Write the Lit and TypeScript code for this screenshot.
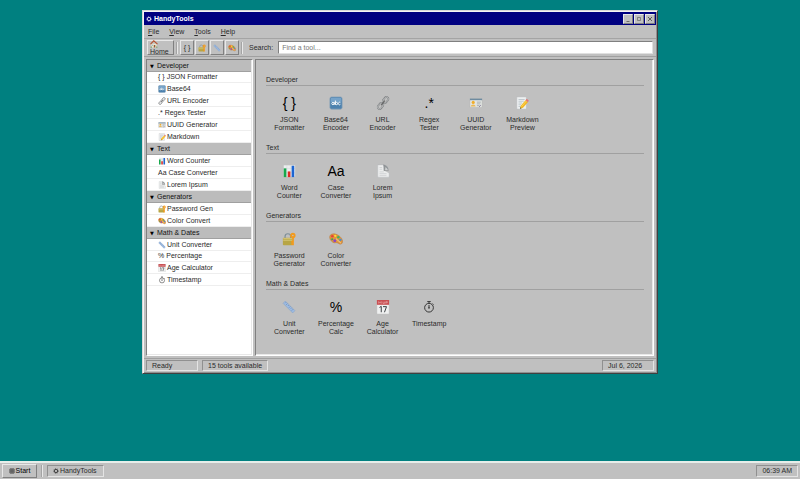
import { LitElement, html, css, svg, nothing, type TemplateResult } from "lit";
import { customElement, property } from "lit/decorators.js";
import { classMap } from "lit/directives/class-map.js";

const art: Record<string, TemplateResult> = {
  abc: svg`<rect x="1" y="1" width="14" height="14" rx="2" fill="#4d82ae" stroke="#8ba4b8" stroke-width=".8"/>
    <rect x="2" y="2" width="12" height="5" rx="1" fill="#76a3c9"/>
    <g fill="none" stroke="#fff" stroke-width="1.1"><circle cx="4.5" cy="8.6" r="1.3"/><path d="M6 7v3M7.3 5.2V10"/><circle cx="8.6" cy="8.6" r="1.3"/><path d="M13 7.6a1.4 1.4 0 1 0 0 2"/></g>`,
  link: svg`<g fill="none" stroke="#6d7072" stroke-width="1.7"><rect x="8.6" y=".8" width="4.6" height="7.6" rx="2.3" transform="rotate(38 10.9 4.6)"/><rect x="2.8" y="7.6" width="4.6" height="7.6" rx="2.3" transform="rotate(38 5.1 11.4)"/></g>
    <g fill="none" stroke="#e2e4e5" stroke-width=".7"><rect x="8.6" y=".8" width="4.6" height="7.6" rx="2.3" transform="rotate(38 10.9 4.6)"/><rect x="2.8" y="7.6" width="4.6" height="7.6" rx="2.3" transform="rotate(38 5.1 11.4)"/></g><path d="M6.2 10.2l3.6-4.6" stroke="#666" stroke-width="1.3" stroke-linecap="round"/>`,
  id: svg`<rect x="1" y="3" width="14" height="10" rx=".8" fill="#e4e6e4" stroke="#a9acaa" stroke-width=".5"/>
    <rect x="1" y="3" width="14" height="1.8" fill="#6e8ba0"/><circle cx="4.8" cy="7.3" r="1.8" fill="#f0ae2c"/><path d="M2 12c.2-3.2 5.3-3.2 5.6 0z" fill="#e9b95a"/>
    <path d="M9 7h4.5M9 9h4M9 11h3" stroke="#909b9d" stroke-width=".8"/><path d="M11.5 12.5l2-2" stroke="#547" stroke-width=".7"/>`,
  memo: svg`<path d="M2 1h11v14H2z" fill="#edf0f1" stroke="#b1b4b6" stroke-width=".5"/><path d="M4 4h7M4 6h6M4 8h4M4 10h3M4 12h3" stroke="#a6b1b9" stroke-width=".7"/>
    <path d="M6.6 11.2L12 4.8l2.7 2.2-5.5 6.4-3.5 1.3z" fill="#f3b822"/><path d="M12 4.8l1-1.2c.6-.6 3.2 1.4 2.6 2.2l-.9 1.2z" fill="#e57672"/><path d="M7.5 12l5.5-6.3" stroke="#ffdc6c" stroke-width=".8"/><path d="M5.7 14.7l.5-1.8 1.4 1.1z" fill="#443"/>`,
  chart: svg`<rect x="2" y="1.5" width="13" height="13" fill="#eceeef"/><path d="M5.5 1.5v13M9.5 1.5v13M2 5h13M2 10h13" stroke="#cdd4d8" stroke-width=".5"/>
    <rect x="2" y="5" width="3" height="10" fill="#17a84c"/><rect x="6.6" y="8.5" width="3" height="6.5" fill="#e02a25"/><rect x="11" y="2" width="3" height="13" fill="#1d65d2"/>`,
  page: svg`<path d="M2 1h7v6l6 3.2V15H2z" fill="#eceded" stroke="#b4b8ba" stroke-width=".4"/><path d="M8.5 1c3.2-.2 6 3 5.8 6.5L9 7.6z" fill="#959a9d"/><path d="M8.5 1c2.4 1.5 2.8 4.5.7 6.5 2-.7 4-.6 5.1 0" fill="#dfe1e2" stroke="#777" stroke-width=".5"/><path d="M4 4h3M4 6h3M4 9h5M4 11h8M4 13h8" stroke="#bbc0c3" stroke-width=".6"/>`,
  lock: svg`<path d="M3.5 8V5c0-4 6.4-4 6.4 0v3" fill="none" stroke="#7f9099" stroke-width="1.4"/><rect x="1" y="6.6" width="11" height="8.4" rx=".8" fill="#b7a545"/><path d="M1.4 7.6h10M1.4 9.4h10" stroke="#dccc7e" stroke-width="1"/>
    <circle cx="12.4" cy="4" r="2" fill="none" stroke="#f29a1c" stroke-width="2.2"/><path d="M12.6 6v9M12.6 11.2h-2.2M12.6 13.8h-2" stroke="#f29a1c" stroke-width="1.9"/>`,
  palette: svg`<path d="M1 4.6C2.2 1.4 7 1.4 11 4c4.2 2.800 5.800 7.600 3.400 9.400-2 1.500-3.400-.8-5.400-1.200-1.800-.3-2.600.9-4.800-.6C1.600 9.800.2 7 1 4.600z" fill="#e0963f" stroke="#b36f2c" stroke-width=".5"/>
    <circle cx="3.800" cy="4.900" r="1.500" fill="#e8413a"/><circle cx="7.200" cy="4.300" r="1.300" fill="#ffdc35"/><circle cx="10.700" cy="6" r="1.400" fill="#3fb562"/><circle cx="13" cy="9" r="1.300" fill="#3f8fda"/><circle cx="6.600" cy="10" r="1.700" fill="#8a45c4"/><circle cx="3.600" cy="8.200" r="1.200" fill="#3f9f5a"/><path d="M8 7.600l5.500 5" stroke="#f4dc9c" stroke-width="1"/>`,
  ruler: svg`<path d="M1.2 3.8L3.8 1.2 14.8 12.2 12.2 14.8z" fill="#9dbbe2" stroke="#7e99bd" stroke-width=".5"/><path d="M4.7 2.5L3.5 3.7M6.3 4.1L4.6 5.8M7.9 5.7L6.7 6.9M9.5 7.3L7.8 9M11.1 8.9L9.9 10.1M12.7 10.5L11 12.2" stroke="#5f7da6" stroke-width=".6"/>`,
  calendar: svg`<rect x="1" y="0" width="14" height="16" rx="1" fill="#eff0f0" stroke="#b7b7b7" stroke-width=".4"/><path d="M1 0h14v5.500H1z" fill="#c94f52"/><path d="M3 4V1.900l1.500 1.300L6 1.900V4M8 1.900v2h1.600v-2M11.200 4V1.900H13v1.200h-1.800" fill="none" stroke="#eebbbb" stroke-width=".6"/>
    <path d="M4 8.500L6 7.300v6.700M8 7.600h4l-2.300 6.400" fill="none" stroke="#34393c" stroke-width="1.100"/>`,
  timer: svg`<circle cx="8" cy="8.8" r="5" fill="none" stroke="#333" stroke-width="1.1"/><path d="M8 3.7V2M6 1.8h4M8 9V5.7M12 4.2l1.2 1" fill="none" stroke="#333" stroke-width="1.1"/><circle cx="8" cy="9" r=".9" fill="#333"/>`,
  house: svg`<path d="M3 7.5h10V15H3z" fill="#efe5ca"/><path d="M1 8.2L7.5 1.5 15 8.2" fill="none" stroke="#b7532f" stroke-width="2.2"/><path d="M7.6 10h3v5h-3z" fill="#925b37"/><path d="M4.3 9.5h2v2h-2z" fill="#6babc9"/><path d="M1 15c0-3 3-3 3 0zM12 15c0-3 3-3 3 0z" fill="#539347"/>`,
  gear: svg`<circle cx="8" cy="8" r="4.6" fill="none" stroke="currentColor" stroke-width="2.2"/><circle cx="8" cy="8" r="6.4" fill="none" stroke="currentColor" stroke-width="1.6" stroke-dasharray="2 3"/><circle cx="8" cy="8" r="1" fill="currentColor"/>`,
  grid: svg`<path d="M2.5 2.5h11v11h-11zM8 2.5v11M2.5 8h11" fill="none" stroke="currentColor" stroke-width="1.5"/>`,
  minimise: svg`<path d="M5 13h6" stroke="#555" stroke-width="1.600"/>`,
  maximise: svg`<path d="M5 5h6v6H5z" fill="none" stroke="#666" stroke-width="1.400"/>`,
  close: svg`<path d="M4 4l8 8M12 4L4 12" stroke="#444" stroke-width="1.600"/>`,
};

@customElement("ht-icon")
class HtIcon extends LitElement {
  @property() name = "";
  static styles = css`
    :host { display: inline-flex; flex: none; width: 8px; height: 8px; }
    .art { width: 100%; height: 100%; }
  `;
  render() {
    return html`<svg class="art" viewBox="0 0 16 16" aria-hidden="true">${art[this.name] ?? nothing}</svg>`;
  }
}

interface Tool { icon?: string; glyph?: string; side: string; title: string; }
interface Group { name: string; tools: Tool[]; }

const groups: Group[] = [
  { name: "Developer", tools: [
    { glyph: "{ }", side: "JSON Formatter", title: "JSON Formatter" },
    { icon: "abc", side: "Base64", title: "Base64 Encoder" },
    { icon: "link", side: "URL Encoder", title: "URL Encoder" },
    { glyph: ".*", side: "Regex Tester", title: "Regex Tester" },
    { icon: "id", side: "UUID Generator", title: "UUID Generator" },
    { icon: "memo", side: "Markdown", title: "Markdown Preview" },
  ] },
  { name: "Text", tools: [
    { icon: "chart", side: "Word Counter", title: "Word Counter" },
    { glyph: "Aa", side: "Case Converter", title: "Case Converter" },
    { icon: "page", side: "Lorem Ipsum", title: "Lorem Ipsum" },
  ] },
  { name: "Generators", tools: [
    { icon: "lock", side: "Password Gen", title: "Password Generator" },
    { icon: "palette", side: "Color Convert", title: "Color Converter" },
  ] },
  { name: "Math & Dates", tools: [
    { icon: "ruler", side: "Unit Converter", title: "Unit Converter" },
    { glyph: "%", side: "Percentage", title: "Percentage Calc" },
    { icon: "calendar", side: "Age Calculator", title: "Age Calculator" },
    { icon: "timer", side: "Timestamp", title: "Timestamp" },
  ] },
];

const menus = ["File", "View", "Tools", "Help"];

@customElement("app-root")
class AppRoot extends LitElement {
  static styles = css`
    :host {
      display: flex; flex-direction: column; min-height: 100vh;
      background: #008080; color: #2a2a2a;
      font: 7px/8px "Liberation Sans", Arial, sans-serif;
    }
    * { box-sizing: border-box; }
    button, input { font: inherit; color: inherit; margin: 0; padding: 0; border: 0; border-radius: 0; background: none; }
    .raised { background: #c0c0c0; border: 1px solid; border-color: #e8e8e8 #808080 #808080 #e8e8e8; }
    .sunken { border: 1px solid; border-color: #909090 #e4e4e4 #e4e4e4 #909090; }
    .desktop { flex: 1; padding: 10px 142px; }
    .window {
      background: #c0c0c0; border: 1px solid; border-color: #d8d8d8 #404040 #404040 #d8d8d8;
      box-shadow: inset 1px 1px #f4f4f4, inset -1px -1px #909090; padding: 1px;
    }
    .titlebar { display: flex; align-items: center; gap: 1px; height: 13px; padding: 0 1px 0 2px; background: #000080; color: #fff; }
    .caption { flex: 1; margin: 0; padding-left: 1px; font: inherit; font-weight: bold; }
    .control { display: flex; align-items: center; justify-content: center; width: 10px; height: 10px; }
    .menubar { display: flex; gap: 2px; height: 14px; align-items: center; border-bottom: 1px solid #a4a4a4; }
    .menu { padding: 0 4px; }
    .toolbar { display: flex; align-items: center; gap: 1px; height: 18px; padding: 0 3px; border-bottom: 1px solid #a0a0a0; }
    .home { width: 27px; height: 15px; padding: 0 2px; text-align: left; line-height: 7px; display: flex; flex-direction: column; justify-content: center; align-items: flex-start; }
    .tool { width: 14px; height: 15px; display: flex; align-items: center; justify-content: center; }
    .rule { width: 2px; height: 12px; margin: 0 1px; border-left: 1px solid #a4a4a4; border-right: 1px solid #e8e8e8; }
    .search-label { padding: 0 4px; }
    .search { flex: 1; min-width: 0; height: 13px; padding: 0 3px; background: #fff; border: 1px solid; border-color: #808080 #e0e0e0 #e0e0e0 #808080; }
    .search::placeholder { color: #777; opacity: 1; }
    .body { display: flex; gap: 2px; padding: 2px; }
    .frame { border: 1px solid; border-color: #808080 #fff #fff #808080; box-shadow: inset -1px -1px #e8e8e8; }
    .sidebar { flex: none; width: 107px; background: #fff; padding: 0 1px 1px 0; }
    .group { display: flex; align-items: center; width: 100%; height: 12px; padding: 0 3px; gap: 3px; background: #bcbcbc; border-bottom: 1px solid #a0a0a0; color: #111; }
    .arrow { font-family: "DejaVu Sans", sans-serif; font-size: 5px; width: 4px; color: #000; }
    .entry { display: flex; align-items: center; width: 100%; height: 12px; padding: 0 11px; gap: 1px; border-bottom: 1px solid #eee; white-space: nowrap; }
    .short { height: 11px; }
    .glyph { padding-right: 1px; }
    .content { flex: 1; min-width: 0; padding: 14px 9px 9px 10px; }
    .heading { margin: 0; font: inherit; line-height: 11px; border-bottom: 1px solid #a0a0a0; }
    .tiles { display: grid; grid-template-columns: repeat(auto-fill, minmax(46px, 1fr)); padding: 8px 5px 10px 0; }
    .tile { display: flex; flex-direction: column; align-items: center; gap: 4px; padding: 0 4px; line-height: 8px; }
    .picture { display: flex; align-items: center; justify-content: center; height: 18px; font-size: 14px; line-height: 18px; color: #000; }
    .large { width: 14px; height: 14px; }
    .small { width: 6px; height: 6px; }
    .status { display: flex; gap: 4px; padding: 1px 2px; border-top: 1px solid #a0a0a0; }
    .cell { height: 11px; line-height: 9px; padding: 0 5px; min-width: 52px; }
    .push { margin-left: auto; }
    .taskbar { display: flex; align-items: center; height: 18px; padding: 0 2px; background: #c0c0c0; border-top: 2px solid #e6eeea; }
    .start { display: flex; align-items: center; justify-content: center; gap: 1px; width: 35px; height: 14px; color: #000; }
    .divider { margin: 0 4px; }
    .task { display: flex; align-items: center; padding: 0 5px; gap: 1px; height: 12px; min-width: 57px; }
    .clock { margin-left: auto; height: 12px; line-height: 10px; padding: 0 5px; }
  `;

  private entry(tool: Tool) {
    return html`<button class=${classMap({ entry: true, short: tool.glyph === "{ }" || tool.glyph === "%" })}>
      ${tool.icon ? html`<ht-icon name=${tool.icon}></ht-icon>` : html`<span class="glyph">${tool.glyph}</span>`}<span>${tool.side}</span>
    </button>`;
  }

  private tile(tool: Tool) {
    return html`<button class="tile">
      <span class="picture">${tool.icon ? html`<ht-icon class="large" name=${tool.icon}></ht-icon>` : tool.glyph}</span>
      <span>${tool.title}</span>
    </button>`;
  }

  render() {
    return html`
      <main class="desktop">
        <section class="window">
          <header class="titlebar">
            <ht-icon class="small" name="gear"></ht-icon><h1 class="caption">HandyTools</h1>
            ${["minimise", "maximise", "close"].map((n) => html`<button class="control raised" aria-label=${n}><ht-icon name=${n}></ht-icon></button>`)}
          </header>
          <nav class="menubar">${menus.map((m) => html`<button class="menu"><u>${m[0]}</u>${m.slice(1)}</button>`)}</nav>
          <div class="toolbar">
            <button class="home raised"><ht-icon name="house"></ht-icon><span>Home</span></button>
            <span class="rule"></span>
            <button class="tool raised">{ }</button>
            ${["lock", "ruler", "palette"].map((n) => html`<button class="tool raised" aria-label=${n}><ht-icon name=${n}></ht-icon></button>`)}
            <span class="rule"></span>
            <label class="search-label" for="search">Search:</label>
            <input class="search" id="search" type="text" placeholder="Find a tool..." />
          </div>
          <div class="body">
            <nav class="sidebar frame">
              ${groups.map((g) => html`<button class="group"><span class="arrow">▼</span><span>${g.name}</span></button>${g.tools.map((t) => this.entry(t))}`)}
            </nav>
            <div class="content frame">
              ${groups.map((g) => html`<section><h2 class="heading">${g.name}</h2><div class="tiles">${g.tools.map((t) => this.tile(t))}</div></section>`)}
            </div>
          </div>
          <footer class="status">
            <span class="cell sunken">Ready</span><span class="cell sunken">15 tools available</span><span class="cell push sunken">Jul 6, 2026</span>
          </footer>
        </section>
      </main>
      <footer class="taskbar">
        <button class="start raised"><ht-icon class="small" name="grid"></ht-icon>Start</button>
        <span class="rule divider"></span>
        <button class="task sunken"><ht-icon class="small" name="gear"></ht-icon>HandyTools</button>
        <span class="clock sunken">06:39 AM</span>
      </footer>`;
  }
}
